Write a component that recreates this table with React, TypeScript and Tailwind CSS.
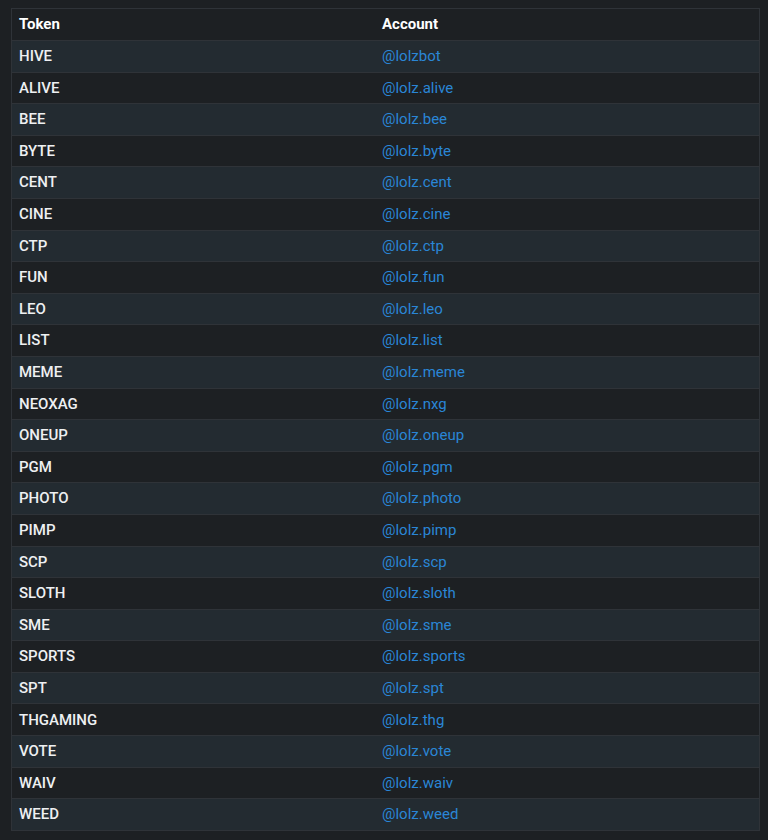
import React from "react";

const rows: [string, string][] = [
  ["HIVE", "@lolzbot"],
  ["ALIVE", "@lolz.alive"],
  ["BEE", "@lolz.bee"],
  ["BYTE", "@lolz.byte"],
  ["CENT", "@lolz.cent"],
  ["CINE", "@lolz.cine"],
  ["CTP", "@lolz.ctp"],
  ["FUN", "@lolz.fun"],
  ["LEO", "@lolz.leo"],
  ["LIST", "@lolz.list"],
  ["MEME", "@lolz.meme"],
  ["NEOXAG", "@lolz.nxg"],
  ["ONEUP", "@lolz.oneup"],
  ["PGM", "@lolz.pgm"],
  ["PHOTO", "@lolz.photo"],
  ["PIMP", "@lolz.pimp"],
  ["SCP", "@lolz.scp"],
  ["SLOTH", "@lolz.sloth"],
  ["SME", "@lolz.sme"],
  ["SPORTS", "@lolz.sports"],
  ["SPT", "@lolz.spt"],
  ["THGAMING", "@lolz.thg"],
  ["VOTE", "@lolz.vote"],
  ["WAIV", "@lolz.waiv"],
  ["WEED", "@lolz.weed"],
];

export default function App() {
  return (
    <div
      className="w-[768px] h-[840px] bg-[#1d2023] pt-[8px] pl-[11px] pr-[8px]"
      style={{ fontFamily: "Roboto, 'Liberation Sans', sans-serif" }}
    >
      <div className="border border-[#2f3338] text-[15px]">
        <div className="grid grid-cols-[362px_1fr] h-[31px] items-center bg-[#1d2023]">
          <div className="pl-[7px] font-bold text-white">Token</div>
          <div className="pl-[8px] font-bold text-white">Account</div>
        </div>
        {rows.map(([t, a], i) => (
          <div
            key={t}
            className={
              "grid grid-cols-[362px_1fr] h-[31.6px] items-center border-t border-[#2f3338] " +
              (i % 2 === 0 ? "bg-[#232b31]" : "bg-[#1d2023]")
            }
          >
            <div className="pl-[7px] font-medium text-[#eef0f2]">{t}</div>
            <div className="pl-[8px] text-[#2a86d6]">{a}</div>
          </div>
        ))}
      </div>
    </div>
  );
}
